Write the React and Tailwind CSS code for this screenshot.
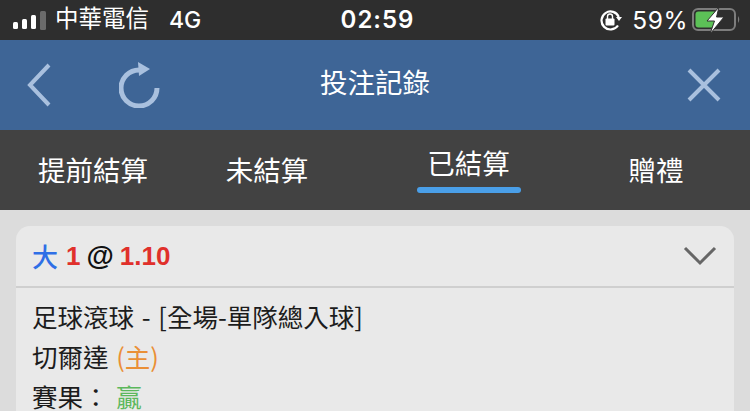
const cjk = { fontFamily: '"Noto Sans CJK TC", "Liberation Sans", sans-serif' };

function Signal() {
  return (
    <svg width="34" height="22" viewBox="0 0 34 22">
      <rect x="0" y="13" width="5" height="7" rx="1.5" fill="#fff" />
      <rect x="9" y="10" width="5" height="10" rx="1.5" fill="#fff" />
      <rect x="18" y="6" width="5" height="14" rx="1.5" fill="#fff" />
      <rect x="27" y="2" width="6" height="19" rx="1.5" fill="#6b6b6b" />
    </svg>
  );
}

function Battery() {
  return (
    <svg width="50" height="28" viewBox="0 0 50 28">
      <rect x="1" y="3" width="42" height="21" rx="5" fill="none" stroke="#7d7d7d" strokeWidth="2" />
      <rect x="3.5" y="5.5" width="21" height="16" rx="3" fill="#5cc157" />
      <path d="M46 10 q2.5 3.5 0 7z" fill="#7d7d7d" />
      <path d="M27 1 L15 15 L22.5 15 L18 28 L32 11 L24.5 11 Z" fill="#fff" stroke="#2e2e2e" strokeWidth="1" />
    </svg>
  );
}

function Lock() {
  return (
    <svg width="24" height="22" viewBox="0 0 24 22">
      <path d="M19 16.5 A9 9 0 1 1 19.8 8" fill="none" stroke="#fff" strokeWidth="2.2" />
      <path d="M17 8 L23 8 L20 12 Z" fill="#fff" />
      <rect x="6.5" y="9.5" width="9" height="7" rx="1" fill="#fff" />
      <path d="M8.5 10 V7.5 a2.5 2.5 0 0 1 5 0 V10" fill="none" stroke="#fff" strokeWidth="1.4" />
    </svg>
  );
}

function StatusBar() {
  return (
    <div className="h-10 bg-[#2e2e2e] flex items-center px-[8px] text-white">
      <div className="flex-1 flex items-center pl-[5px]">
        <Signal />
        <span className="ml-[8px] mb-1 text-[23.5px] leading-none" style={cjk}>中華電信</span>
        <span className="ml-[20px] text-[23px] leading-none font-['Inter'] font-medium">4G</span>
      </div>
      <span className="text-[24px] leading-none font-['Inter'] font-semibold tracking-[1px]">02:59</span>
      <div className="flex-1 flex items-center justify-end">
        <Lock />
        <span className="ml-[9px] text-[24.5px] leading-none font-['Inter'] tracking-[0.5px]">59%</span>
        <span className="ml-[4px] flex"><Battery /></span>
      </div>
    </div>
  );
}

function NavBar() {
  return (
    <div className="h-[90px] bg-[#3e6596] flex items-center justify-between px-[26px] text-[#a9c0de]">
      <div className="flex items-center w-[140px] gap-[67px]">
        <svg width="26" height="44" viewBox="0 0 26 44">
          <path d="M23 2 L4 22 L23 42" fill="none" stroke="currentColor" strokeWidth="4" />
        </svg>
        <svg width="42" height="46" viewBox="0 0 42 46">
          <path d="M38 26 A18 18 0 1 1 20 8" fill="none" stroke="currentColor" strokeWidth="5" />
          <path d="M19 0 L31 7 L20 14 Z" fill="currentColor" />
        </svg>
      </div>
      <span className="text-white text-[27.5px] leading-none mb-[6px]" style={cjk}>投注記錄</span>
      <div className="w-[140px] flex justify-end pr-[3px]">
        <svg width="34" height="34" viewBox="0 0 34 34">
          <path d="M2 2 L32 32 M32 2 L2 32" fill="none" stroke="currentColor" strokeWidth="4" />
        </svg>
      </div>
    </div>
  );
}

function Tabs() {
  return (
    <div className="h-20 bg-[#424242] grid grid-cols-[186px_162px_241px_134px] text-white text-[27.5px] leading-none" style={cjk}>
      <div className="flex items-center justify-center">提前結算</div>
      <div className="flex items-center justify-center">未結算</div>
      <div className="flex flex-col items-center pt-[19px]">
        <span>已結算</span>
        <div className="mt-[10px] w-[104px] h-[6px] rounded-[3px] bg-[#4a9fe8]" />
      </div>
      <div className="flex items-center justify-center">贈禮</div>
    </div>
  );
}

function Card() {
  return (
    <div className="mx-4 mt-4 rounded-t-[14px] bg-[#e9e9e9]">
      <div className="h-[62px] flex items-center justify-between pl-[16px] pr-[16px] border-b-2 border-[#cfcfcf]">
        <div className="flex items-center text-[26px] font-bold leading-none font-['Liberation_Sans']">
          <span className="text-[#2f6fe6] font-medium" style={cjk}>大</span>
          <span className="ml-[8px] text-[#e0302b]">1</span>
          <span className="ml-[6px] text-[28px] text-[#111]">@</span>
          <span className="ml-[6px] text-[#e0302b]">1.10</span>
        </div>
        <svg width="36" height="20" viewBox="0 0 36 20">
          <path d="M3 2 L18 17 L33 2" fill="none" stroke="#666" strokeWidth="3" />
        </svg>
      </div>
      <div className="pl-4 pt-[8px] text-[25.5px] leading-[40px] text-[#1c1c1c] [word-spacing:2px]" style={cjk}>
        <div>足球滾球 - [全場-單隊總入球]</div>
        <div>切爾達 <span className="text-[#ea8f36]">(主)</span></div>
        <div>賽果： <span className="text-[#5cb85c]">贏</span></div>
      </div>
    </div>
  );
}

export default function App() {
  return (
    <div className="w-[750px] h-[411px] overflow-hidden bg-[#dcdcdc]">
      <StatusBar />
      <NavBar />
      <Tabs />
      <Card />
    </div>
  );
}
